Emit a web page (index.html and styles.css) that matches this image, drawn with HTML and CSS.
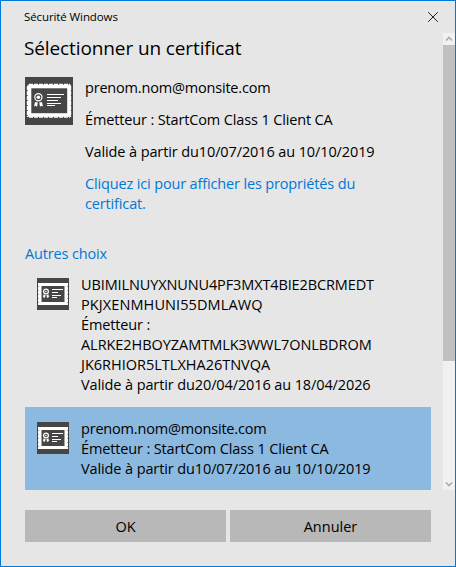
FILE: index.html
```
<!DOCTYPE html>
<html lang="fr">
<head>
<meta charset="utf-8">
<title>Sécurité Windows</title>
<link rel="stylesheet" href="styles.css">
</head>
<body>
<svg class="defs" width="0" height="0">
  <symbol id="cert" viewBox="0 0 48 48">
    <rect width="48" height="48" fill="#464646"/>
    <rect x="4.500" y="9.500" width="39.500" height="28.500" fill="none" stroke="#fff" stroke-width="3.600"/>
    <path d="M4 7.500H45M4 40H45" stroke="#fff" stroke-width="1.400" stroke-dasharray="4 1"/>
    <path d="M2.500 9V40M45.500 9V40" stroke="#fff" stroke-width="1.400" stroke-dasharray="4 1"/>
    <circle cx="13.400" cy="20.200" r="3.600" fill="none" stroke="#fff" stroke-width="1.200"/>
    <circle cx="13.400" cy="20.200" r="1.800" fill="#fff"/>
    <path d="M10 25L12.800 25.500L12 30L10.800 28.800L9 29.500ZM17 25L14.300 25.500L15 30L16 28.800L18 29.500Z" fill="#fff"/>
    <path d="M22 17.500H39M22 20.500H36M22 23.500H33M22 26.500H36M22 28.500H30" stroke="#fff" stroke-width="1"/>
  </symbol>
  <symbol id="cert-small" viewBox="0 0 32 32">
    <rect width="32" height="32" fill="#464646"/>
    <rect x="3" y="6.500" width="26" height="19" fill="none" stroke="#fff" stroke-width="3"/>
    <path d="M1.500 5V27M30.500 5V27" stroke="#fff" stroke-width="1" stroke-dasharray="3 1"/>
    <circle cx="9" cy="13.500" r="2.400" fill="none" stroke="#fff" stroke-width="1.200"/>
    <circle cx="9" cy="13.500" r=".8" fill="#fff"/>
    <path d="M6.500 16.500L8.500 17L8 20L6 19ZM11.500 16.500L9.500 17L10 20L12 19Z" fill="#fff"/>
    <path d="M15 11.500H26M15 14.500H21M15 17.500H24M15 19.500H20" stroke="#fff" stroke-width="1"/>
  </symbol>
</svg>
<div class="window">
  <header class="titlebar">
    <span class="caption">Sécurité Windows</span>
    <svg class="close" width="10" height="10" viewBox="0 0 10 10"><path d="M.2 .2L9.800 9.800M9.800 .2L.2 9.800"/></svg>
  </header>
  <div class="body">
    <main class="content">
      <h1>Sélectionner un certificat</h1>
      <section class="current">
        <svg width="48" height="48"><use href="#cert"/></svg>
        <div class="details">
          <p><span class="mail">prenom.nom@monsite.com</span></p>
          <p><span class="issuer">Émetteur : StartCom Class 1 Client CA</span></p>
          <p><span class="valid">Valide à partir du10/07/2016 au 10/10/2019</span></p>
          <p class="link">Cliquez ici pour afficher les propriétés du<br>certificat.</p>
        </div>
      </section>
      <h2>Autres choix</h2>
      <section class="choice">
        <svg width="32" height="32"><use href="#cert-small"/></svg>
        <div>
          <span class="id-a">UBIMILNUYXNUNU4PF3MXT4BIE2BCRMEDT</span><br>
          <span class="id-b">PKJXENMHUNI55DMLAWQ</span><br>
          <span class="issuer">Émetteur :</span><br>
          <span class="id-c">ALRKE2HBOYZAMTMLK3WWL7ONLBDROM</span><br>
          <span>JK6RHIOR5LTLXHA26TNVQA</span><br>
          <span class="valid">Valide à partir du20/04/2016 au 18/04/2026</span>
        </div>
      </section>
      <section class="choice selected">
        <svg width="32" height="32"><use href="#cert-small"/></svg>
        <div>
          <span class="mail">prenom.nom@monsite.com</span><br>
          <span class="issuer">Émetteur : StartCom Class 1 Client CA</span><br>
          <span class="valid">Valide à partir du10/07/2016 au 10/10/2019</span>
        </div>
      </section>
    </main>
    <div class="scrollbar">
      <svg width="12" height="12" viewBox="0 0 12 12"><path d="M3 7.500L6 4.500L9 7.500"/></svg>
      <div class="thumb"></div>
      <svg class="down" width="12" height="12" viewBox="0 0 12 12"><path d="M3 4.500L6 7.500L9 4.500"/></svg>
    </div>
  </div>
  <footer>
    <button class="ok">OK</button>
    <button>Annuler</button>
  </footer>
</div>
</body>
</html>
```
FILE: styles.css
```
* { box-sizing: border-box; }
body {
  margin: 0;
  font: 14.5px/20px "Open Sans", "Noto Sans", sans-serif;
  color: #000;
}
.defs { display: block; height: 0; }
.window {
  width: 456px;
  height: 567px;
  border: 1px solid #0078d7;
  background: #e6e6e6;
  display: flex;
  flex-direction: column;
  white-space: nowrap;
}
.titlebar {
  height: 32px;
  flex: none;
  display: flex;
  justify-content: space-between;
  align-items: center;
  padding: 0 17px 0 23px;
}
.caption { font-size: 11.5px; letter-spacing: -0.1px; }
.close { fill: none; stroke: #222; stroke-width: 1; }
.body { display: flex; height: 457px; flex: none; }
.content { width: 430px; padding-left: 24px; flex: none; }
h1, h2, p { margin: 0; font-weight: 400; }
h1 { font-size: 19px; line-height: 30px; margin-left: -1px; letter-spacing: -0.11px; }
.current { display: flex; gap: 12px; margin-top: 14px; height: 167px; }
.current svg, .choice svg { flex: none; }
.details { padding-top: 1px; }
.details p { margin-bottom: 12px; }
.mail { letter-spacing: -0.19px; }
.issuer { letter-spacing: -0.14px; }
.valid { letter-spacing: -0.11px; }
.id-a { letter-spacing: -0.12px; }
.id-b { letter-spacing: 0.1px; }
.id-c { letter-spacing: -0.05px; }
.link, h2 { color: #0078d7; letter-spacing: -0.15px; }
h2 { font-size: 14.5px; line-height: 20px; }
.choice { display: flex; gap: 12px; height: 143px; padding: 11px 12px 0; }
.choice svg { margin-top: 3px; }
.choice.selected { height: 83px; padding-top: 12px; background: #8bb9e0; }
.scrollbar {
  width: 12px;
  margin-left: 12px;
  background: #f1f1f1;
  display: flex;
  flex-direction: column;
}
.scrollbar svg { fill: none; stroke: #aaa; stroke-width: 1.6; flex: none; }
.thumb { height: 316px; background: #c1c1c1; }
.down { margin-top: auto; }
footer { display: flex; gap: 4px; padding: 20px 24px 0; }
button {
  width: 201px;
  height: 32px;
  flex: none;
  border: 0;
  padding: 2px 0 0;
  font: inherit;
  color: #000;
  background: #b8b8b8;
}
.ok { letter-spacing: -0.2px; }
```
